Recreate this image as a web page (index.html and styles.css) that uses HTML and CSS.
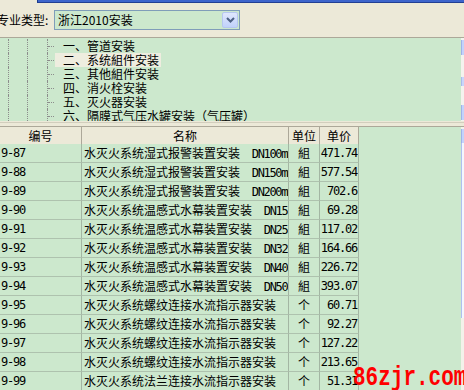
FILE: index.html
```html
<!DOCTYPE html>
<html lang="zh-CN">
<head>
<meta charset="utf-8">
<link rel="stylesheet" href="styles.css">
</head>
<body>
<div class="app">
  <div class="titlebar"></div>
  <div class="filter">
    <span class="filter-label">专业类型:</span>
    <div class="combo">
      <span class="combo-text">浙江2010安装</span>
      <span class="combo-btn">
        <svg width="9" height="6" viewBox="0 0 9 6"><path d="M1 1 L4.5 4.5 L8 1" fill="none" stroke="#4d6185" stroke-width="2"/></svg>
      </span>
    </div>
  </div>

  <div class="tree-pane">
    <div class="tree">
      <div class="node"><span class="guide"></span><span class="guide g2"></span><span class="branch"><i></i></span><span class="label">一、管道安装</span></div>
      <div class="node"><span class="guide"></span><span class="guide g2"></span><span class="branch"><i></i></span><span class="label selected">二、系统組件安装</span></div>
      <div class="node"><span class="guide"></span><span class="guide g2"></span><span class="branch"><i></i></span><span class="label">三、其他組件安装</span></div>
      <div class="node"><span class="guide"></span><span class="guide g2"></span><span class="branch"><i></i></span><span class="label">四、消火栓安装</span></div>
      <div class="node"><span class="guide"></span><span class="guide g2"></span><span class="branch"><i></i></span><span class="label">五、灭火器安装</span></div>
      <div class="node"><span class="guide"></span><span class="guide g2"></span><span class="branch"><i></i></span><span class="label">六、隔膜式气压水罐安装（气压罐）</span></div>
    </div>
    <div class="vscroll">
      <span class="sb-btn"></span>
      <span class="sb-gap"></span>
      <span class="sb-thumb"></span>
      <span class="sb-fill"></span>
      <span class="sb-btn"></span>
    </div>
  </div>

  <div class="split"></div>

  <div class="grid-pane">
    <div class="grid-wrap">
      <div class="grid">
        <div class="hd">编号</div><div class="hd">名称</div><div class="hd">单位</div><div class="hd">单价</div>

        <div class="c code">9-87</div><div class="c name">水灭火系统湿式报警装置安装<span class="m">  DN100mm</span></div><div class="c unit">組</div><div class="c price">471.74</div>
        <div class="c code">9-88</div><div class="c name">水灭火系统湿式报警装置安装<span class="m">  DN150mm</span></div><div class="c unit">組</div><div class="c price">577.54</div>
        <div class="c code">9-89</div><div class="c name">水灭火系统湿式报警装置安装<span class="m">  DN200mm</span></div><div class="c unit">組</div><div class="c price">702.6</div>
        <div class="c code">9-90</div><div class="c name">水灭火系统温感式水幕装置安装<span class="m">  DN15</span></div><div class="c unit">組</div><div class="c price">69.28</div>
        <div class="c code">9-91</div><div class="c name">水灭火系统温感式水幕装置安装<span class="m">  DN25</span></div><div class="c unit">組</div><div class="c price">117.02</div>
        <div class="c code">9-92</div><div class="c name">水灭火系统温感式水幕装置安装<span class="m">  DN32</span></div><div class="c unit">組</div><div class="c price">164.66</div>
        <div class="c code">9-93</div><div class="c name">水灭火系统温感式水幕装置安装<span class="m">  DN40</span></div><div class="c unit">組</div><div class="c price">226.72</div>
        <div class="c code">9-94</div><div class="c name">水灭火系统温感式水幕装置安装<span class="m">  DN50</span></div><div class="c unit">組</div><div class="c price">393.07</div>
        <div class="c code">9-95</div><div class="c name">水灭火系统螺纹连接水流指示器安装</div><div class="c unit">个</div><div class="c price">60.71</div>
        <div class="c code">9-96</div><div class="c name">水灭火系统螺纹连接水流指示器安装</div><div class="c unit">个</div><div class="c price">92.27</div>
        <div class="c code">9-97</div><div class="c name">水灭火系统螺纹连接水流指示器安装</div><div class="c unit">个</div><div class="c price">127.22</div>
        <div class="c code">9-98</div><div class="c name">水灭火系统螺纹连接水流指示器安装</div><div class="c unit">个</div><div class="c price">213.65</div>
        <div class="c code">9-99</div><div class="c name">水灭火系统法兰连接水流指示器安装</div><div class="c unit">个</div><div class="c price">51.31</div>
      </div>
    </div>
    <div class="vscroll2">
      <span class="sb-btn2"></span>
      <span class="sb-thumb2"></span>
      <span class="sb-rest"></span>
    </div>
  </div>

  <div class="watermark">86zjr.com</div>
</div>
</body>
</html>
```

FILE: styles.css
```css
html, body {
  margin: 0;
  padding: 0;
}
body {
  width: 464px;
  height: 390px;
  overflow: hidden;
  background: #ece9d8;
  font-family: "Noto Sans CJK SC", sans-serif;
  font-size: 12px;
  color: #000;
}
.app {
  position: relative;
  width: 464px;
  height: 390px;
  overflow: hidden;
  display: flex;
  flex-direction: column;
}
.titlebar {
  height: 3px;
  margin-left: 37px;
  box-sizing: border-box;
  background: #3d65cc;
  border-left: 1px solid #1b3a8a;
  border-bottom: 1px solid #213f93;
  flex: none;
}
.filter {
  height: 34px;
  flex: none;
  display: flex;
  align-items: flex-start;
  padding-top: 7px;
  box-sizing: border-box;
}
.filter-label {
  margin-left: -3px;
  width: 57px;
  line-height: 20px;
  white-space: nowrap;
}
.combo {
  width: 186px;
  height: 20px;
  box-sizing: border-box;
  border: 1px solid #7f9db9;
  background: #cce8cd;
  display: flex;
  align-items: center;
}
.combo-text {
  flex: 1;
  padding-left: 3px;
  line-height: 18px;
  white-space: nowrap;
}
.combo-btn {
  width: 16px;
  height: 16px;
  margin: 1px;
  box-sizing: border-box;
  border: 1px solid #b6c7f0;
  border-radius: 2px;
  background: linear-gradient(#dfe7fd, #c1d2fb);
  display: flex;
  align-items: center;
  justify-content: center;
}

/* tree */
.tree-pane {
  height: 84px;
  flex: none;
  box-sizing: border-box;
  border-top: 1px solid #aca899;
  background: #cce8cd;
  display: flex;
}
.tree {
  flex: 1;
  padding-top: 1px;
  overflow: hidden;
}
.node {
  display: flex;
  height: 14px;
  padding-left: 8px;
}
.guide {
  width: 19px;
  flex: none;
  box-sizing: border-box;
  border-left: 1px dotted #8c8c8c;
}
.guide.g2 {
  width: 20px;
}
.branch {
  width: 8px;
  flex: none;
  box-sizing: border-box;
  border-left: 1px dotted #8c8c8c;
  display: flex;
  align-items: center;
}
.branch i {
  display: block;
  width: 6px;
  border-top: 1px dotted #8c8c8c;
}
.label {
  padding: 0 2px 0 8px;
  line-height: 14px;
  white-space: nowrap;
}
.label.selected {
  background: #eeeddf;
}
.vscroll {
  width: 3px;
  flex: none;
  display: flex;
  flex-direction: column;
  padding: 2px 0 1px;
  box-sizing: border-box;
  background: #f4f3ee;
}
.sb-btn {
  height: 15px;
  background: #c3d3fc;
  border-left: 1px solid #9fb3e8;
}
.sb-gap {
  height: 22px;
}
.sb-thumb {
  height: 9px;
  background: #c8d6fb;
  border-left: 1px solid #a9bceb;
}
.sb-fill {
  flex: 1;
}

.split {
  height: 6px;
  flex: none;
  box-sizing: border-box;
  background: linear-gradient(#ece9d8 1px, #d2cebd 1px, #d2cebd 2px, #ece9d8 2px);
  border-bottom: 1px solid #aca899;
}

/* grid */
.grid-pane {
  flex: 1;
  display: flex;
  min-height: 0;
}
.grid-wrap {
  flex: 1;
  background: #cce8cd;
  overflow: hidden;
}
.grid {
  display: grid;
  grid-template-columns: 82px 207px 31px 39px;
  grid-auto-rows: 19px;
  grid-template-rows: 17px;
  width: 359px;
}
.hd {
  background: #ece9d8;
  border-right: 1px solid #aca899;
  text-align: center;
  line-height: 17px;
  white-space: nowrap;
}
.c {
  border-right: 1px solid #a3b6a3;
  border-bottom: 1px solid #aec2ae;
  line-height: 18px;
  white-space: pre;
  overflow: hidden;
}
.code {
  padding-left: 1px;
  font-family: "DejaVu Sans Mono", monospace;
  letter-spacing: -1.2px;
}
.name {
  padding-left: 2px;
}
.m {
  font-family: "DejaVu Sans Mono", monospace;
  letter-spacing: -1.35px;
}
.unit {
  text-align: center;
}
.price {
  text-align: right;
  padding-right: 1px;
  font-family: "DejaVu Sans Mono", monospace;
  letter-spacing: -1.2px;
}

.vscroll2 {
  width: 3px;
  flex: none;
  display: flex;
  flex-direction: column;
  padding-top: 2px;
  box-sizing: border-box;
  background: #f3f1ea;
}
.sb-btn2 {
  height: 14px;
  background: #c3d3fc;
  border-left: 1px solid #9fb3e8;
}
.sb-thumb2 {
  height: 175px;
  background: #f4f6fd;
  border-left: 1px solid #aebff0;
}
.sb-rest {
  flex: 1;
}

.watermark {
  position: absolute;
  left: 353px;
  top: 369px;
  font-family: "Liberation Mono", "Courier New", monospace;
  font-weight: bold;
  font-size: 21px;
  line-height: 1;
  color: #f00;
  white-space: nowrap;
  transform-origin: 0 16px;
  transform: scaleY(1.35);
}
```
